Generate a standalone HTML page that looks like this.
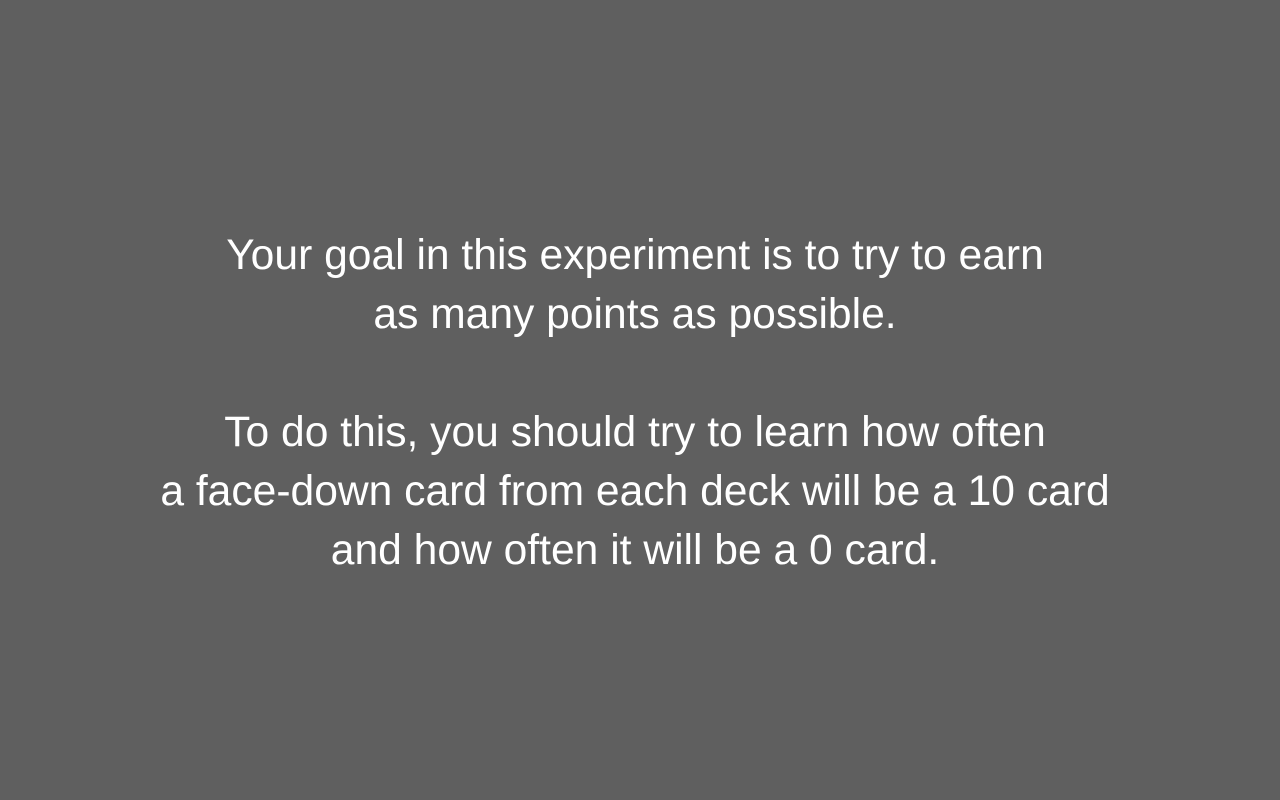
<!DOCTYPE html>
<html><head><meta charset="utf-8"><style>
html,body{margin:0;padding:0;width:1280px;height:800px;background:#5f5f5f;overflow:hidden}
.t{position:absolute;left:-5px;top:226px;width:1280px;text-align:center;color:#fff;font-family:"Liberation Sans",Arial,sans-serif;font-size:42.6px;line-height:59px;white-space:pre}
</style></head><body>
<div class="t">Your goal in this experiment is to try to earn
as many points as possible.

To do this, you should try to learn how often
a face-down card from each deck will be a 10 card
and how often it will be a 0 card.</div>
</body></html>
